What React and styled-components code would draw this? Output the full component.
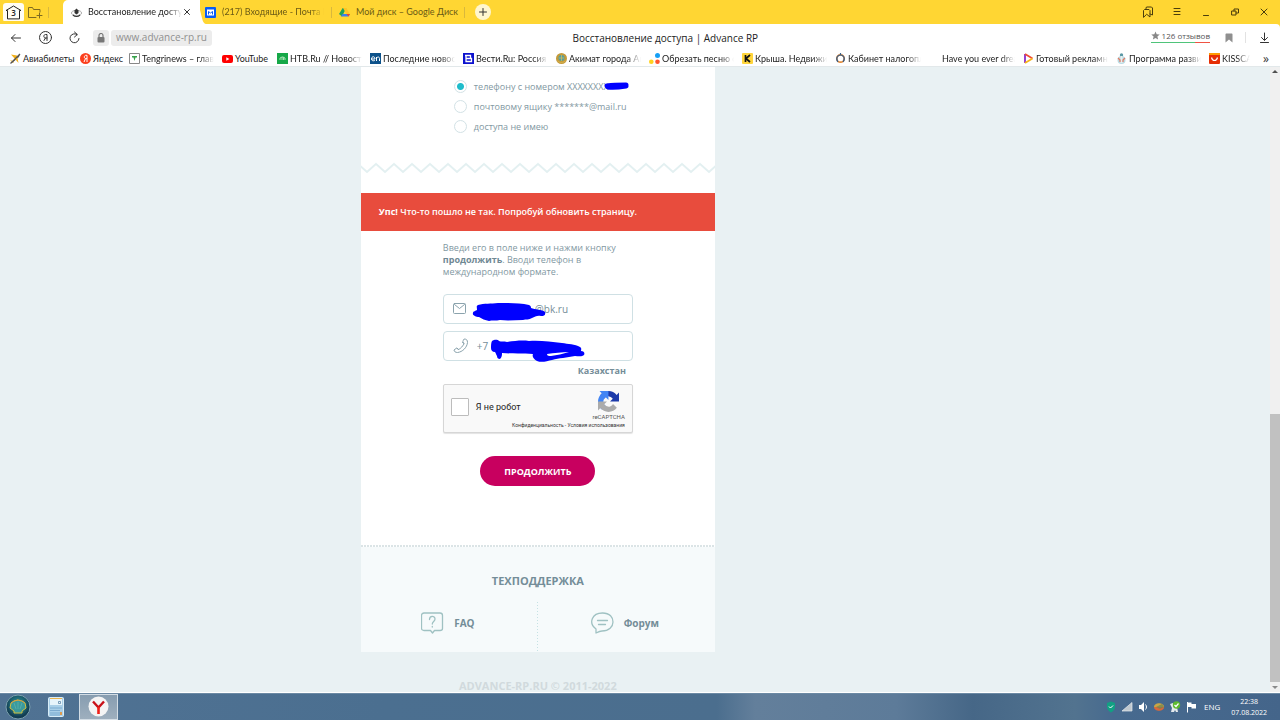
import React, { useState } from "react";
import styled, { createGlobalStyle } from "styled-components";

const GlobalStyle = createGlobalStyle`
  * {
    box-sizing: border-box;
  }
  body {
    margin: 0;
    font-family: "Open Sans", "Noto Sans", sans-serif;
    overflow: hidden;
  }
  button, input {
    font-family: inherit;
  }
  button {
    border: 0;
    padding: 0;
    background: none;
    cursor: pointer;
  }
  a {
    color: inherit;
    text-decoration: none;
  }
`;

const Screen = styled.div`
  display: flex;
  flex-direction: column;
  height: 100vh;
  background: #e9f1f3;
`;

/* browser tabs */

const TabBar = styled.div`
  display: flex;
  align-items: center;
  height: 24px;
  flex: none;
  padding-left: 3px;
  background: #ffd633;
`;

const HomeButton = styled.button`
  display: flex;
  width: 21px;
  height: 19px;
  align-items: center;
  justify-content: center;
  border-radius: 3px;
  background: #fffdf5;
`;

const FolderButton = styled.button`
  display: flex;
  margin-left: 3px;
`;

const Divider = styled.span`
  flex: none;
  width: 1px;
  height: 11px;
  margin-left: ${(p) => p.$gap || 0}px;
  background: ${(p) => p.$color || "#d9b83c"};
`;

const ActiveTab = styled.div`
  display: flex;
  align-items: center;
  position: relative;
  width: 137px;
  height: 24px;
  margin-left: 14px;
  padding: 0 8px;
  border-radius: 5px 0 0 0;
  background: #fff;
  svg {
    flex: none;
  }
`;

const TabEdge = styled.svg`
  position: absolute;
  left: 130px;
  top: 0;
`;

const Label = styled.span`
  flex: 1;
  min-width: 0;
  white-space: nowrap;
  ${(p) =>
    !p.$full &&
    "overflow: hidden; mask-image: linear-gradient(to left, transparent, #000 14px);"}
`;

const TabTitle = styled(Label)`
  margin-left: 6px;
  font-family: Lato, "Noto Sans", sans-serif;
  font-size: 9px;
  line-height: 14px;
  color: ${(p) => (p.$dim ? "#6b5a15" : "#222")};
`;

const Tab = styled.div`
  display: flex;
  align-items: center;
  width: ${(p) => p.$w}px;
  margin-left: ${(p) => p.$gap}px;
  svg {
    flex: none;
  }
`;

const CloseButton = styled.button`
  display: flex;
  position: relative;
  z-index: 1;
`;

const NewTab = styled.button`
  display: flex;
  width: 16px;
  height: 16px;
  margin-left: 10px;
  align-items: center;
  justify-content: center;
  border-radius: 50%;
  background: #fff6cf;
`;

const WindowButtons = styled.div`
  display: flex;
  align-items: center;
  gap: 17px;
  margin-left: auto;
  padding-right: 10px;
  button {
    display: flex;
  }
`;

/* address bar */

const AddressBar = styled.div`
  display: flex;
  align-items: center;
  flex: none;
  height: 27px;
  padding: 0 10px;
  background: #fff;
  box-shadow: 0 -3px 0 #ffd633;
  border-radius: 0 4px 0 0;
`;

const NavButton = styled.button`
  display: flex;
  margin-left: ${(p) => p.$before || 0}px;
  margin-right: ${(p) => p.$gap || 0}px;
`;

const LockChip = styled.span`
  display: flex;
  align-items: center;
  justify-content: center;
  width: 16px;
  height: 16px;
  border-radius: 3px;
  background: #ececec;
`;

const UrlChip = styled.span`
  height: 16px;
  margin-left: 2px;
  padding: 0 5px;
  border-radius: 3px;
  background: #ececec;
  font-size: 10px;
  line-height: 15px;
  color: #909090;
`;

const PageTitle = styled.span`
  flex: 1;
  padding-right: 32px;
  font-size: 10px;
  text-align: center;
  color: #222;
`;

const Reviews = styled.a`
  display: flex;
  align-items: center;
  gap: 2px;
  margin: 0 15px 3px 0;
  font-size: 8px;
  line-height: 12px;
  color: #555;
  border-bottom: 1px solid;
  border-image: linear-gradient(to right, #4fc47a 74%, #ef5343 74%) 1;
`;

const Bookmarks = styled.nav`
  display: flex;
  align-items: center;
  flex: none;
  gap: 8px;
  height: 16px;
  padding: 0 11px 0 10px;
  background: #fff;
  border-bottom: 1px solid #e2e8ea;
`;

const Bookmark = styled.a`
  display: flex;
  align-items: center;
  flex: none;
  gap: 2px;
  width: ${(p) => p.$w}px;
  font-family: Lato, "Noto Sans", sans-serif;
  font-size: 9px;
  line-height: 14px;
  color: #222;
  svg {
    flex: none;
  }
`;

const More = styled.button`
  margin-left: auto;
  font-size: 12px;
  line-height: 12px;
  color: #333;
`;

/* site */

const Viewport = styled.div`
  display: flex;
  flex: 1;
  min-height: 0;
`;

const Site = styled.div`
  display: grid;
  flex: 1;
  grid-template-columns: 13fr minmax(0, 354px) 20fr;
  overflow: hidden;
`;

const Column = styled.main`
  grid-column: 2;
`;

const Card = styled.section`
  padding-bottom: 59px;
  background: #fff;
`;

const Options = styled.div`
  display: flex;
  flex-direction: column;
  padding: 9px 0 26px 93px;
`;

const Option = styled.label`
  display: flex;
  align-items: center;
  position: relative;
  gap: 7px;
  height: 20px;
  font-size: 9px;
  color: #8298a2;
  white-space: nowrap;
`;

const Radio = styled.input`
  appearance: none;
  width: 13px;
  height: 13px;
  margin: 0;
  border: 1px solid #d3e2e6;
  border-radius: 50%;
  background: #fff;
  &:checked {
    background: radial-gradient(circle, #1fbccb 3px, #fff 4px);
  }
`;

const Scribble = styled.svg`
  position: absolute;
  left: ${(p) => p.$x}px;
  top: ${(p) => p.$y}px;
  pointer-events: none;
`;

const Zigzag = styled.svg`
  display: block;
  width: 100%;
  height: 12px;
`;

const Alert = styled.p`
  margin: 19px 0 0;
  padding: 0 18px;
  background: #e84c3d;
  color: #fff;
  font-size: 9px;
  font-weight: 600;
  line-height: 38px;
  b {
    font-weight: 700;
  }
`;

const Form = styled.form`
  display: flex;
  flex-direction: column;
  width: 190px;
  margin: 0 auto;
  padding-top: 11px;
`;

const Hint = styled.p`
  margin: 0 0 16px;
  font-size: 9px;
  line-height: 12px;
  color: #8298a2;
  b {
    color: #6f8893;
  }
`;

const Field = styled.label`
  display: flex;
  align-items: center;
  position: relative;
  height: 30px;
  margin-bottom: ${(p) => p.$gap || 0}px;
  padding-left: 9px;
  border: 1px solid #cfe0e4;
  border-radius: 4px;
  background: #fff;
`;

const FieldInput = styled.input`
  flex: 1;
  min-width: 0;
  padding: 0 0 0 ${(p) => p.$indent}px;
  border: 0;
  outline: 0;
  background: none;
  font-size: 10px;
  color: #748d98;
`;

const Country = styled.span`
  padding: 3px 7px 7px 0;
  font-size: 9px;
  line-height: 13px;
  font-weight: 700;
  text-align: right;
  color: #748d98;
`;

const Captcha = styled.div`
  display: grid;
  grid-template-columns: 1fr auto;
  align-content: start;
  height: 49px;
  padding: 6px 7px 0;
  border: 1px solid #d6d6d6;
  border-radius: 2px;
  background: #f9f9f9;
  box-shadow: 0 1px 1px #e3e3e3;
  font-family: Roboto, "Noto Sans", sans-serif;
`;

const RobotLabel = styled.label`
  display: flex;
  align-items: center;
  gap: 7px;
  padding-top: 2px;
  font-size: 9px;
  color: #222;
`;

const RobotBox = styled.input`
  appearance: none;
  width: 18px;
  height: 18px;
  margin: 0;
  border: 1px solid #bcbcbc;
  border-radius: 1px;
  background: #fff;
  &:checked {
    background: #1fbccb;
  }
`;

const Brand = styled.div`
  display: flex;
  flex-direction: column;
  align-items: center;
  font-size: 6px;
  line-height: 9px;
  color: #555;
`;

const Terms = styled.div`
  grid-column: 1 / 3;
  font-size: 5px;
  line-height: 8px;
  text-align: right;
  color: #333;
`;

const Submit = styled.button`
  align-self: center;
  width: 115px;
  height: 30px;
  margin-top: 23px;
  border-radius: 15px;
  background: #c8005f;
  color: #fff;
  font-size: 9px;
  font-weight: 700;
`;

const Support = styled.section`
  padding-top: 2px;
  background:
    repeating-linear-gradient(to right, #dbe4e6 0 2px, #fff 2px 3px) top / 100% 2px no-repeat,
    #f6fafb;
`;

const SupportTitle = styled.h2`
  margin: 0;
  padding: 26px 0 13px;
  font-size: 11px;
  line-height: 16px;
  text-align: center;
  color: #748d98;
`;

const SupportLinks = styled.div`
  display: grid;
  grid-template-columns: 1fr 1fr;
`;

const SupportLink = styled.a`
  display: flex;
  align-items: center;
  justify-content: center;
  gap: 10px;
  height: 50px;
  padding: 0 3px 9px 0;
  font-size: 10px;
  font-weight: 700;
  color: #748d98;
  &:first-child {
    background: repeating-linear-gradient(#c6e2e4 0 1px, transparent 1px 3px) right / 1px 100% no-repeat;
  }
`;

const Copyright = styled.footer`
  padding-top: 26px;
  font-size: 11px;
  line-height: 16px;
  font-weight: 700;
  text-align: center;
  white-space: nowrap;
  color: #d1dadd;
`;

const ScrollTrack = styled.div`
  display: flex;
  flex-direction: column;
  align-items: center;
  width: 10px;
  padding: 3px 0;
  background: #f0f0f0;
`;

const Arrow = styled.span`
  border: 3px solid transparent;
  border-top: ${(p) => (p.$up ? "0" : "3px solid #8a8a8a")};
  border-bottom: ${(p) => (p.$up ? "3px solid #505050" : "0")};
`;

const Thumb = styled.div`
  width: 100%;
  height: 43.3%;
  margin: auto 0 4px;
  background: #c1c1c1;
`;

/* taskbar */

const Taskbar = styled.footer`
  display: flex;
  align-items: center;
  flex: none;
  height: 28px;
  padding: 0 13px 0 5px;
  border-top: 1px solid #fff;
  box-shadow: inset 0 1px 0 #6c8aa4;
  background: linear-gradient(
    to right,
    #507293 0%,
    #4b6f90 30%,
    #4b6e8e 56%,
    #637f9b 59%,
    #5d7b99 70%,
    #466787 76%,
    #52738f 84%,
    #476a8f 87%,
    #44658a 100%
  );
`;

const TaskButton = styled.button`
  display: flex;
  align-items: center;
  justify-content: center;
  width: ${(p) => p.$w}px;
  height: 26px;
  margin-right: ${(p) => p.$gap || 0}px;
  ${(p) =>
    p.$active &&
    "border: 1px solid #d3dde5; background: linear-gradient(#879db0, #9eafbe);"}
`;

const Tray = styled.div`
  display: flex;
  align-items: center;
  gap: 4px;
  margin-left: auto;
  color: #fff;
`;

const Language = styled.span`
  margin-left: 3px;
  font-size: 8px;
`;

const Clock = styled.div`
  display: flex;
  flex-direction: column;
  margin-left: 7px;
  font-size: 7px;
  line-height: 11px;
  text-align: center;
`;

const line = { fill: "none", stroke: "currentColor", strokeLinecap: "round", strokeLinejoin: "round" };

const favicons = {
  plane: (
    <>
      <path d="M1 10 9 2l1-1-1 3-7 6z" fill="#555" />
      <path d="M1 1.500l6 1 1.500 7.500L5 6zM0 7l3 1 1 2-2-1z" fill="#f4b21b" />
      <path d="M.5 10.500 10 1" stroke="#555" strokeWidth="1.200" />
    </>
  ),
  yandex: (
    <>
      <circle cx="5.500" cy="5.500" r="5.500" fill="#fc3f1d" />
      <path d="M7 9V2.300H5.800C4 2.300 3.700 5.600 5.800 5.600H7M5.500 5.600 4 9" fill="none" stroke="#fff" />
    </>
  ),
  tengri: (
    <>
      <path d="M.5.5h10v10H.5z" fill="#fff" stroke="#888" />
      <path d="M3 3h5v1.500H6.500L5.500 8l-1-3.500H3z" fill="#37a24a" />
    </>
  ),
  youtube: (
    <>
      <rect y="2" width="11" height="8" rx="2" fill="#f00" />
      <path d="M4.300 4.200 7.400 6 4.300 7.800z" fill="#fff" />
    </>
  ),
  ntv: (
    <>
      <path d="M0 0h11v11H0z" fill="#16a848" />
      <path d="M3 7V5l2-1h1l2 1v2M5 4v3M6.500 4v3" fill="none" stroke="#a8e0b4" />
    </>
  ),
  en: (
    <>
      <path d="M0 0h11v11H0z" fill="#0d528a" />
      <path d="M1.500 6H5c0-3-3.500-3-3.500 0 0 2 2 2 3.300 1.500M6.500 8V4M6.500 5.500C7 3.500 9.500 3.500 9.500 5.500V8" fill="none" stroke="#fff" />
    </>
  ),
  vesti: (
    <>
      <path d="M0 0h11v11H0z" fill="#0d12ce" />
      <path d="M2 2.500h5.500v3H3v3h5.500v-3h-1M3 2.500v6" fill="none" stroke="#fff" strokeWidth="1.300" />
    </>
  ),
  akimat: (
    <>
      <circle cx="5.500" cy="5.500" r="5.500" fill="#c49a3a" />
      <circle cx="5.500" cy="5" r="3" fill="#4f9fa4" />
      <path d="M1.500 8c3 2 5 2 8 0M5.500 2v6M3 5h5" stroke="#dfbd56" fill="none" strokeWidth=".7" />
    </>
  ),
  cutter: (
    <>
      <circle cx="8.500" cy="2.500" r="2.500" fill="#17a0f5" />
      <circle cx="8.500" cy="8.700" r="2.300" fill="#ff5530" />
      <circle cx="2.300" cy="8.700" r="2.300" fill="#ffd21f" />
    </>
  ),
  krysha: (
    <>
      <rect width="11" height="11" rx="1" fill="#ffd53b" />
      <path d="M3.500 2v7M8 2 4 5.500 8 9" fill="none" stroke="#111" strokeWidth="1.700" />
    </>
  ),
  tax: (
    <>
      <circle cx="5.500" cy="5.500" r="3.700" fill="none" stroke="#e58a37" strokeWidth="1.700" />
      <path d="M3 9C0 5 3 2 5.500 2S11 5 8 9M5.500 0v2" fill="none" stroke="#3b5f86" strokeWidth="1.200" />
    </>
  ),
  blank: null,
  play: (
    <>
      <path d="M2 1v9" stroke="#8a2cc8" strokeWidth="1.800" />
      <path d="M2 1l7.500 4.500" stroke="#ef4c36" strokeWidth="1.800" />
      <path d="M9.500 5.500 2 10" stroke="#f7b51b" strokeWidth="1.800" />
    </>
  ),
  program: (
    <>
      <circle cx="5.500" cy="7" r="4" fill="#b9dbe4" />
      <circle cx="5.500" cy="2" r="1.700" fill="#5b98a5" />
      <path d="M5.500 3v7" stroke="#e9eef0" strokeWidth="2" />
      <path d="M2 5l2 2v2M9 5 7 7v2" fill="none" stroke="#e27a61" strokeWidth="1.200" />
    </>
  ),
  ali: (
    <>
      <rect width="11" height="11" rx="1" fill="#e62e04" />
      <path d="M0 1c0-1 0-1 1-1h9c1 0 1 0 1 1v1H0z" fill="#ff9a00" />
      <path d="M2.500 4.500c1 4 5 4 6 0" fill="none" stroke="#fff" strokeWidth="1.200" />
    </>
  ),
  advance: (
    <>
      <ellipse cx="5.500" cy="6" rx="5" ry="2.500" fill="none" stroke="#aaa" />
      <path d="M3.500 3.500l2-2 2 2v2.500l-2 1.500-2-1.500z" fill="#333" />
      <path d="M2 8c2 2 5 2 7 0" fill="none" stroke="#333" strokeWidth="1.200" />
    </>
  ),
  mail: (
    <>
      <rect width="11" height="11" rx="1" fill="#075cf5" />
      <path d="M2 2.500h7v6H2z" fill="#fff" />
      <path d="M3.500 7.500V4.500l2 1.500 2-1.500v3" fill="none" stroke="#075cf5" />
    </>
  ),
  drive: (
    <>
      <path d="M3.700 1h3.600L3 9.500 0 7z" fill="#20a35a" />
      <path d="M4 1h3.300L11 7.200H7.500z" fill="#ffc425" />
      <path d="M3.600 7H11L9.500 9.500H2z" fill="#3d7df0" />
      <path d="M11 7 9.500 9.500 7.500 7z" fill="#e84435" />
    </>
  ),
};

const Favicon = ({ name }) => (
  <svg width="11" height="11" viewBox="0 0 11 11">
    {favicons[name]}
  </svg>
);

const bookmarks = [
  { icon: "plane", text: "Авиабилеты", w: 62, full: true },
  { icon: "yandex", text: "Яндекс", w: 41, full: true },
  { icon: "tengri", text: "Tengrinews – главн", w: 85 },
  { icon: "youtube", text: "YouTube", w: 47, full: true },
  { icon: "ntv", text: "НТВ.Ru // Новости", w: 85 },
  { icon: "en", text: "Последние новост", w: 85 },
  { icon: "vesti", text: "Вести.Ru: Россия 24", w: 85 },
  { icon: "akimat", text: "Акимат города Акт", w: 85 },
  { icon: "cutter", text: "Обрезать песню он", w: 85 },
  { icon: "krysha", text: "Крыша. Недвижим", w: 85 },
  { icon: "tax", text: "Кабинет налогопла", w: 86 },
  { icon: "blank", text: "Have you ever dream", w: 86 },
  { icon: "play", text: "Готовый рекламны", w: 85 },
  { icon: "program", text: "Программа развит", w: 85 },
  { icon: "ali", text: "KISSCAS", w: 41 },
];

const Browser = () => (
  <>
    <TabBar>
      <HomeButton aria-label="Вкладки">
        <svg width="17" height="15" viewBox="0 0 17 15" color="#222">
          <path d="M2.500 13.500v-8H1L8.500 1 16 5.500h-1.500v8z" {...line} />
          <text x="8.500" y="11" fontSize="8" fontWeight="600" textAnchor="middle" fill="#222">
            3
          </text>
        </svg>
      </HomeButton>
      <FolderButton aria-label="Новая группа">
        <svg width="16" height="13" viewBox="0 0 16 13" color="#7d6a20">
          <path d="M9 11.500H1.500v-10h4l1 2H13V6M12.500 7v5M10 9.500h5" {...line} />
        </svg>
      </FolderButton>
      <Divider $gap={5} />
      <ActiveTab>
        <TabEdge width="14" height="24" viewBox="0 0 14 24">
          <path d="M0 0h1c3 0 4 2 5 6l3 12c1 4 2 6 5 6H0z" fill="#fff" />
        </TabEdge>
        <Favicon name="advance" />
        <TabTitle>Восстановление доступа</TabTitle>
        <CloseButton aria-label="Закрыть">
          <svg width="10" height="10" viewBox="0 0 10 10" color="#333">
            <path d="M2.500 2.500l5 5M7.500 2.500l-5 5" {...line} />
          </svg>
        </CloseButton>
      </ActiveTab>
      <Tab $w={119} $gap={5}>
        <Favicon name="mail" />
        <TabTitle $dim>(217) Входящие - Почта Mail.ru</TabTitle>
      </Tab>
      <Divider $gap={7} />
      <Tab $w={118} $gap={7}>
        <Favicon name="drive" />
        <TabTitle $dim $full>
          Мой диск – Google Диск
        </TabTitle>
      </Tab>
      <Divider $gap={7} />
      <NewTab aria-label="Новая вкладка">
        <svg width="8" height="8" viewBox="0 0 8 8" color="#333">
          <path d="M4 .5v7M.5 4h7" {...line} />
        </svg>
      </NewTab>
      <WindowButtons>
        <button aria-label="Закладки">
          <svg width="12" height="12" viewBox="0 0 12 12" color="#4a3d0c">
            <path d="M1.500 11V4.500l1-1H7l1 1V11L5 8.500zM4 3.500v-2l1-.5h4.500l1 1v7L8 8" {...line} />
          </svg>
        </button>
        <button aria-label="Меню">
          <svg width="12" height="12" viewBox="0 0 12 12" color="#4a3d0c">
            <path d="M3 2.500h6M3 5.500h6M3 8.500h6" {...line} />
          </svg>
        </button>
        <button aria-label="Свернуть">
          <svg width="12" height="12" viewBox="0 0 12 12" color="#4a3d0c">
            <path d="M3.500 9.500h5" {...line} />
          </svg>
        </button>
        <button aria-label="Развернуть">
          <svg width="12" height="12" viewBox="0 0 12 12" color="#4a3d0c">
            <path d="M3 5h4v4H3zM5 5V3h4.500v4H7" {...line} />
          </svg>
        </button>
        <button aria-label="Закрыть окно">
          <svg width="12" height="12" viewBox="0 0 12 12" color="#4a3d0c">
            <path d="M3 3l6 6M9 3 3 9" {...line} />
          </svg>
        </button>
      </WindowButtons>
    </TabBar>
    <AddressBar>
      <NavButton $gap={17} aria-label="Назад">
        <svg width="12" height="12" viewBox="0 0 12 12" color="#333">
          <path d="M10.500 6h-9M5 2.500 1.500 6 5 9.500" {...line} />
        </svg>
      </NavButton>
      <NavButton $gap={16} aria-label="Яндекс">
        <svg width="13" height="13" viewBox="0 0 13 13" color="#333">
          <circle cx="6.500" cy="6.500" r="6" {...line} />
          <path d="M8 9.500v-6H6.500C4.300 3.500 4.300 7 6.500 7H8M6.500 7 5 9.500" {...line} />
        </svg>
      </NavButton>
      <NavButton $gap={12} aria-label="Обновить">
        <svg width="13" height="14" viewBox="0 0 13 14" color="#333">
          <path d="M11 7.500A4.500 4.500 0 1 1 9 3.500M6.500 1 9.300 3.500 6.500 6" {...line} />
        </svg>
      </NavButton>
      <LockChip>
        <svg width="8" height="10" viewBox="0 0 8 10">
          <rect x=".5" y="4" width="7" height="5.500" rx="1" fill="#777" />
          <path d="M2 4V2.500a2 2 0 0 1 4 0V4" fill="none" stroke="#777" strokeWidth="1.200" />
        </svg>
      </LockChip>
      <UrlChip>www.advance-rp.ru</UrlChip>
      <PageTitle>Восстановление доступа | Advance RP</PageTitle>
      <Reviews href="#reviews">
        <svg width="9" height="9" viewBox="0 0 10 10">
          <path d="M5 .5 6.300 3.700l3.400.3-2.600 2.200.8 3.300L5 7.700 2.100 9.500l.8-3.300L.3 4l3.400-.3z" fill="#888" />
        </svg>
        126 отзывов
      </Reviews>
      <NavButton $gap={12} aria-label="В закладки">
        <svg width="8" height="10" viewBox="0 0 8 10">
          <path d="M.5 1.500c0-.6.4-1 1-1h5c.6 0 1 .4 1 1v8L4 6.500.5 9.500z" fill="#8f8f8f" />
        </svg>
      </NavButton>
      <Divider $color="#e2e2e2" />
      <NavButton $before={13} aria-label="Загрузки">
        <svg width="11" height="11" viewBox="0 0 11 11" color="#333">
          <path d="M5.500 1v7M2.500 5.500l3 3 3-3M1.500 10.500h8" {...line} />
        </svg>
      </NavButton>
    </AddressBar>
    <Bookmarks>
      {bookmarks.map((b) => (
        <Bookmark key={b.icon} href="#" $w={b.w}>
          <Favicon name={b.icon} />
          <Label $full={b.full}>{b.text}</Label>
        </Bookmark>
      ))}
      <More aria-label="Ещё">»</More>
    </Bookmarks>
  </>
);

const RestoreForm = () => {
  const [email, setEmail] = useState("@bk.ru");
  const [phone, setPhone] = useState("+7");

  return (
    <Form onSubmit={(e) => e.preventDefault()}>
      <Hint>
        Введи его в поле ниже и нажми кнопку <b>продолжить</b>. Вводи телефон в
        международном формате.
      </Hint>
      <Field $gap={7}>
        <svg width="14" height="12" viewBox="0 0 14 12" color="#8ba3ad">
          <rect x=".5" y=".5" width="12" height="10" rx="1" {...line} />
          <path d="M1.500 1.500l5 4 5-4" {...line} />
        </svg>
        <FieldInput
          aria-label="Почта"
          $indent={68}
          value={email}
          onChange={(e) => setEmail(e.target.value)}
        />
        <Scribble $x={28} $y={7} width="76" height="21" viewBox="0 0 76 21">
          <path
            d="M6 3c6-2 13-1 20-2 10 0 22 0 31 2 2 1 2 2 2 3 4 2 11 1 14 4 1 3-1 4-4 4-4-1-6 1-9 2-3 2-6 1-9 2-8 0-15 1-23 0-4 1-8 0-11 1-4-1-7-2-10-4-3 0-7-2-6-4 0-2 3-2 4-3 0-3-1-4 1-5z"
            fill="#00f"
          />
        </Scribble>
      </Field>
      <Field>
        <svg width="16" height="16" viewBox="0 0 16 16" color="#8ba3ad">
          <path
            d="M11.500 1c2 0 3 1 3 3.500-.5 5-5 9.500-10 10C2.500 14.500 1 13.500 1 12l2-1.500c1-.5 1.500 0 2 1 2 0 6-4.500 6-6.500-1-.5-1.500-1-1-2zM9.500 4.500l1.500 1M4 10l1.500 1.500"
            {...line}
          />
        </svg>
        <FieldInput
          aria-label="Телефон"
          $indent={8}
          value={phone}
          onChange={(e) => setPhone(e.target.value)}
        />
        <Scribble $x={46} $y={7} width="96" height="25" viewBox="0 0 96 25">
          <path
            d="M2 2c2-1 5-2 7 0 2 1 5 0 8 1 7-1 15-2 22-1 11-1 22 1 33 2 6 1 13 1 18 4 2 1 1 3 1 4 3 0 4 2 3 4-2 2-6 1-9 1-4 1-8 1-12 2-4 0-7 1-11 2-5 1-10 3-15 1-4-2-5-5-4-7-10-1-20 0-31-1 0 2 0 4-2 6-2 0-3-1-3-3-1-1-1-3-2-4-3 0-4-2-4-4 0-3 0-5 1-7zM57 15c0 2 2 2 4 2 6-1 12-2 18-4-7 0-15 1-22 2z"
            fill="#00f"
            fillRule="evenodd"
          />
        </Scribble>
      </Field>
      <Country>Казахстан</Country>
      <Captcha>
        <RobotLabel>
          <RobotBox type="checkbox" />Я не робот
        </RobotLabel>
        <Brand>
          <svg width="21" height="21" viewBox="0 0 64 64">
            <path
              d="M64 31.955l-.033-1.370V4.687l-7.160 7.160C50.948 4.674 42.033.093 32.050.093c-10.400 0-19.630 4.960-25.474 12.640l11.736 11.860a15.550 15.550 0 0 1 4.754-5.334c2.050-1.600 4.952-2.906 8.968-2.906.485 0 .86.057 1.135.163 4.976.393 9.288 3.140 11.828 7.124l-8.307 8.307L64 31.953"
              fill="#1c3aa9"
            />
            <path
              d="M31.862.094l-1.370.033H4.594l7.160 7.160C4.580 13.147 0 22.060 0 32.046c0 10.400 4.960 19.630 12.640 25.474L24.500 45.784a15.550 15.550 0 0 1-5.334-4.754c-1.600-2.050-2.906-4.952-2.906-8.968 0-.485.057-.86.163-1.135.393-4.976 3.140-9.288 7.124-11.828l8.307 8.307L31.860.095"
              fill="#4285f4"
            />
            <path
              d="M0 32.045l.033 1.370v25.898l7.160-7.160c5.860 7.173 14.774 11.754 24.760 11.754 10.400 0 19.630-4.960 25.474-12.640l-11.736-11.860a15.550 15.550 0 0 1-4.754 5.334c-2.050 1.600-4.952 2.906-8.968 2.906-.485 0-.86-.057-1.135-.163-4.976-.393-9.288-3.140-11.828-7.124l8.307-8.307c-10.522.040-22.400.066-27.295-.005"
              fill="#ababab"
            />
          </svg>
          reCAPTCHA
        </Brand>
        <Terms>
          <a href="#privacy">Конфиденциальность</a> - <a href="#terms">Условия использования</a>
        </Terms>
      </Captcha>
      <Submit type="submit">ПРОДОЛЖИТЬ</Submit>
    </Form>
  );
};

const RestorePage = () => {
  const [method, setMethod] = useState("phone");
  const pick = (e) => setMethod(e.target.value);

  return (
    <Column>
      <Card>
        <Options>
          <Option>
            <Radio type="radio" name="method" value="phone" checked={method === "phone"} onChange={pick} />
            телефону с номером XXXXXXXX
            <Scribble $x={149} $y={5} width="28" height="10" viewBox="0 0 28 10">
              <path d="M4 5c7-1 13-1 19-1M5 6c6 1 12 0 18-1" fill="none" stroke="#00f" strokeWidth="5" strokeLinecap="round" />
            </Scribble>
          </Option>
          <Option>
            <Radio type="radio" name="method" value="mail" checked={method === "mail"} onChange={pick} />
            почтовому ящику *******@mail.ru
          </Option>
          <Option>
            <Radio type="radio" name="method" value="none" checked={method === "none"} onChange={pick} />
            доступа не имею
          </Option>
        </Options>
        <Zigzag>
          <defs>
            <pattern id="zigzag" x="-3" width="18" height="12" patternUnits="userSpaceOnUse">
              <path d="M-1 1 0 2l9 8 9-8 1-1" fill="none" stroke="#e3f0f1" strokeWidth="2" />
            </pattern>
          </defs>
          <rect width="100%" height="12" fill="url(#zigzag)" />
        </Zigzag>
        <Alert>
          <b>Упс!</b> Что-то пошло не так. Попробуй обновить страницу.
        </Alert>
        <RestoreForm />
      </Card>
      <Support>
        <SupportTitle>ТЕХПОДДЕРЖКА</SupportTitle>
        <SupportLinks>
          <SupportLink href="#faq">
            <svg width="23" height="22" viewBox="0 0 23 22" color="#9fc1c2">
              <path d="M3 1h16c1.500 0 2.500 1 2.500 2.500v13c0 1-1 2-2.500 2h-5.500l-2 2.500-2-2.500H3c-1.500 0-2.500-1-2.500-2v-13C.5 2 1.500 1 3 1z" {...line} strokeWidth="1.300" />
              <path d="M8.500 7.500c0-4 5.500-4 5.500-.5 0 2.500-2.700 2.500-2.700 5M11.300 14.500v.5" {...line} strokeWidth="1.300" />
            </svg>
            FAQ
          </SupportLink>
          <SupportLink href="#forum">
            <svg width="23" height="22" viewBox="0 0 23 22" color="#9fc1c2">
              <path d="M5 21v-4C-3 11 1 1 11.500 1 19 1 22 5.500 22 10s-4 9-11 9c-2 0-4 1-6 2z" {...line} strokeWidth="1.300" />
              <path d="M6.500 8.500h10M7.500 12.500h7" {...line} strokeWidth="1.300" />
            </svg>
            Форум
          </SupportLink>
        </SupportLinks>
      </Support>
      <Copyright>ADVANCE-RP.RU © 2011-2022</Copyright>
    </Column>
  );
};

const WindowsTaskbar = () => (
  <Taskbar>
    <TaskButton $w={26} $gap={12} aria-label="Пуск">
      <svg width="26" height="26" viewBox="0 0 26 26">
        <defs>
          <radialGradient id="orb" cy=".4">
            <stop offset="0" stopColor="#3f9a9a" />
            <stop offset=".6" stopColor="#1f6a76" />
            <stop offset="1" stopColor="#123c52" />
          </radialGradient>
        </defs>
        <circle cx="13" cy="13" r="12" fill="url(#orb)" stroke="#7ba0ae" />
        <path d="M9 19v-2l-4-3 1-5 3-2 4-1 4 1 3 2 1 5-4 3v2z" fill="#3b9a9c" stroke="#d1bf3e" />
        <path d="M13 15V8M11 15 9 9M15 15l2-6" stroke="#5fb5b0" fill="none" strokeWidth=".7" />
        <path d="M6 9l3-2 4-1 4 1 3 2" fill="none" stroke="#e89438" strokeDasharray="2 1" />
      </svg>
    </TaskButton>
    <TaskButton $w={26} $gap={10} aria-label="Калькулятор">
      <svg width="16" height="20" viewBox="0 0 16 20">
        <rect x=".5" y=".5" width="15" height="19" rx="1" fill="#a9cfe8" stroke="#d8edf8" />
        <path d="M2 2h12v6H2z" fill="#e7f4fb" />
        <path d="M2 1.500h12" stroke="#e9b44f" />
        <path d="M10.500 4.500h2v2h-2z" fill="none" stroke="#5e86a8" strokeWidth=".8" />
        <path d="M2.500 11h11M2.500 13.500h9M2.500 16h9M2.500 18h9" stroke="#4f86b8" strokeDasharray="1 1" />
        <path d="M13 15v3" stroke="#f28a1d" strokeWidth="1.500" />
      </svg>
    </TaskButton>
    <TaskButton $w={39} $active aria-label="Яндекс Браузер">
      <svg width="21" height="21" viewBox="0 0 21 21">
        <circle cx="10.500" cy="10.500" r="10" fill="#f4f4f4" />
        <path d="M5 5.500l5.500 6L16 5.500" fill="none" stroke="#c81018" strokeWidth="2.400" />
        <path d="M10.500 11v7" stroke="#f02018" strokeWidth="2.600" />
      </svg>
    </TaskButton>
    <Tray>
      <svg width="12" height="12" viewBox="0 0 12 12">
        <path d="M6 .5 10 2v4c0 2.500-2 4.500-4 5.500C4 10.500 2 8.500 2 6V2z" fill="#12a083" />
        <path d="M4 5.500 5.500 7 8 4.500" fill="none" stroke="#fff" />
      </svg>
      <svg width="12" height="12" viewBox="0 0 12 12">
        <path d="M1 10 11 1.500V10z" fill="#bfc8cf" stroke="#e7ebee" strokeWidth=".7" />
      </svg>
      <svg width="12" height="12" viewBox="0 0 12 12">
        <path d="M2 4h2l3-3v10L4 8H2z" fill="#fff" />
        <path d="M8.500 3.500c1.300 1.500 1.300 3.500 0 5" fill="none" stroke="#fff" />
      </svg>
      <svg width="12" height="12" viewBox="0 0 12 12">
        <path d="M1 6c0-5 10-5 10 0z" fill="#c9a544" />
        <path d="M1 6h10c0 5-10 5-10 0z" fill="#d7683b" />
        <path d="M3 6l6-3 2 3-4 2z" fill="#6f8450" opacity=".7" />
      </svg>
      <svg width="12" height="12" viewBox="0 0 12 12">
        <path d="M1 3l3-1 1 4h3l1 5H7L6 9l-1 2H2l1-4z" fill="#e4e9ec" />
        <circle cx="7.500" cy="4" r="3.700" fill="#5fbb2f" />
        <path d="M5.500 4 7 5.500 9.500 2.500" fill="none" stroke="#fff" strokeWidth="1.200" />
      </svg>
      <svg width="12" height="12" viewBox="0 0 12 12">
        <path d="M2.500 1v10.500" stroke="#fff" />
        <path d="M3 1.500h3.500V3H11v4.500H6.500V6H3z" fill="#fff" />
      </svg>
      <Language>ENG</Language>
      <Clock>
        <span>22:38</span>
        <span>07.08.2022</span>
      </Clock>
    </Tray>
  </Taskbar>
);

const App = () => (
  <Screen>
    <GlobalStyle />
    <Browser />
    <Viewport>
      <Site>
        <RestorePage />
      </Site>
      <ScrollTrack>
        <Arrow $up />
        <Thumb />
        <Arrow />
      </ScrollTrack>
    </Viewport>
    <WindowsTaskbar />
  </Screen>
);

export default App;
